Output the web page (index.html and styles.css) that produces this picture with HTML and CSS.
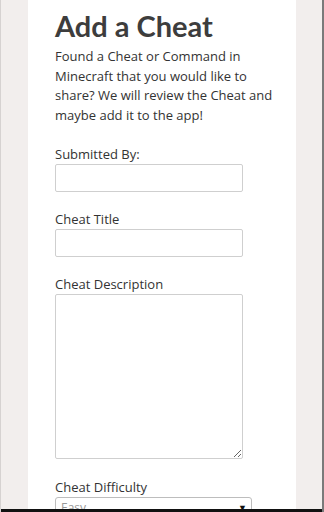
FILE: index.html
```html
<!DOCTYPE html>
<html lang="en">
<head>
  <meta charset="UTF-8">
  <meta name="viewport" content="width=device-width, initial-scale=1.0">
  <title>Add a Cheat</title>
  <link rel="stylesheet" href="styles.css">
</head>
<body>
  <div class="screen">
    <div class="viewport">
      <div class="page">
        <h1 class="title">Add a Cheat</h1>
        <p class="intro">Found a Cheat or Command in Minecraft that you would like to share? We will review the Cheat and maybe add it to the app!</p>
        <form class="cheat-form">
          <label for="submitted-by">Submitted By:</label>
          <input type="text" id="submitted-by">
          <label for="cheat-title">Cheat Title</label>
          <input type="text" id="cheat-title">
          <label for="cheat-description">Cheat Description</label>
          <textarea id="cheat-description"></textarea>
          <label for="cheat-difficulty">Cheat Difficulty</label>
          <div class="select">
            <span>Easy</span>
            <span class="arrow">&#9660;</span>
          </div>
        </form>
      </div>
    </div>
    <div class="bar"></div>
  </div>
</body>
</html>
```

FILE: styles.css
```css
body {
  margin: 0;
  padding: 0;
  font-family: "Open Sans", sans-serif;
  background-color: #f2eeed;
}
.screen {
  width: 324px;
  height: 512px;
  box-sizing: border-box;
  display: flex;
  flex-direction: column;
  border-left: 1px solid #d6d2d1;
  border-right: 2px solid #7a7a7a;
}
.viewport {
  flex: 1;
  overflow: hidden;
  background-color: #f2eeed;
}
.bar {
  height: 3px;
  background-color: #111;
}
.page {
  margin-left: 27px;
  width: 268px;
  height: 100%;
  box-sizing: border-box;
  background-color: #fff;
  padding: 8px 0 0 27px;
}
.title {
  font-family: Lato, sans-serif;
  font-weight: bold;
  font-size: 29px;
  line-height: 36px;
  color: #3d3d3d;
  margin: 0;
}
.intro {
  font-size: 13px;
  line-height: 19.7px;
  color: #333;
  margin: 3px 0 18px 0;
  width: 220px;
}
.cheat-form {
  display: flex;
  flex-direction: column;
  align-items: flex-start;
}
.cheat-form label {
  font-size: 13px;
  line-height: 20px;
  color: #333;
}
.cheat-form input,
.cheat-form textarea {
  width: 188px;
  height: 28px;
  box-sizing: border-box;
  border: 1px solid #cfcfcf;
  border-radius: 2px;
  margin: 0 0 17px 0;
  font-family: inherit;
}
.cheat-form textarea {
  height: 165px;
  resize: vertical;
  margin-bottom: 18px;
}
.select {
  width: 197px;
  height: 22px;
  box-sizing: border-box;
  border: 1px solid #bdbdbd;
  border-radius: 3px;
  display: flex;
  justify-content: space-between;
  align-items: center;
  padding: 0 4px 0 5px;
  font-size: 12px;
  color: #999;
}
.select .arrow {
  font-size: 9px;
  color: #111;
}
```
